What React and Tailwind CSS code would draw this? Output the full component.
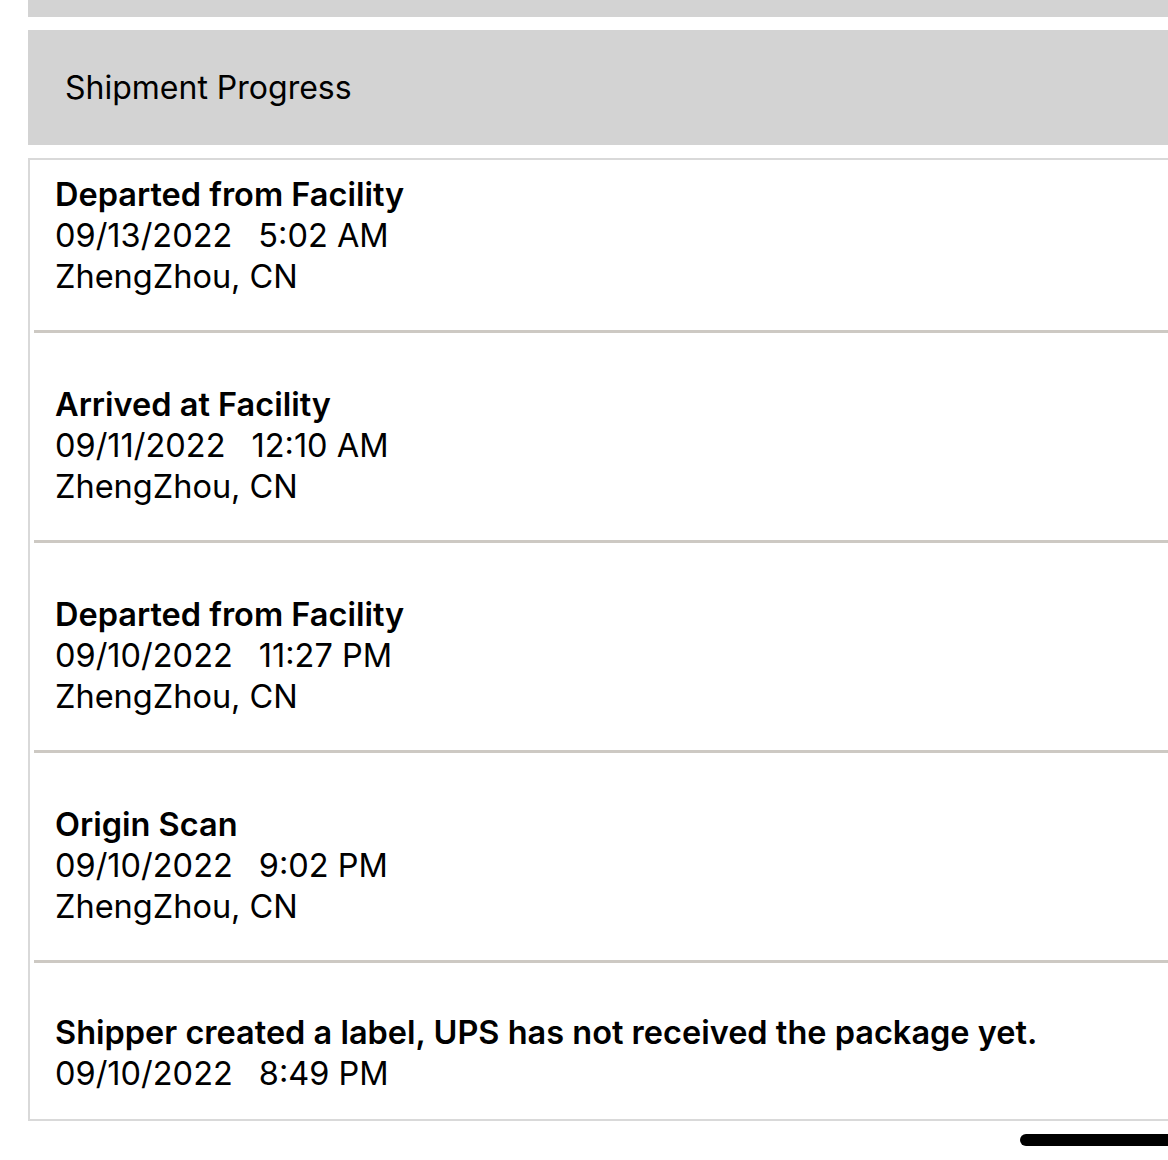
import React from "react";

const events = [
  {
    title: "Departed from Facility",
    date: "09/13/2022",
    time: "5:02 AM",
    place: "ZhengZhou, CN",
  },
  {
    title: "Arrived at Facility",
    date: "09/11/2022",
    time: "12:10 AM",
    place: "ZhengZhou, CN",
  },
  {
    title: "Departed from Facility",
    date: "09/10/2022",
    time: "11:27 PM",
    place: "ZhengZhou, CN",
  },
  {
    title: "Origin Scan",
    date: "09/10/2022",
    time: "9:02 PM",
    place: "ZhengZhou, CN",
  },
  {
    title: "Shipper created a label, UPS has not received the package yet.",
    date: "09/10/2022",
    time: "8:49 PM",
  },
];

const App = () => {
  return (
    <div
      className="w-[1168px] h-[1160px] bg-white overflow-hidden text-black"
      style={{ fontFamily: "Inter, 'Noto Sans', sans-serif" }}
    >
      <div className="pl-[28px]">
        <div className="h-[17px] bg-[#d3d3d3]" />

        <div className="mt-[13px] h-[115px] bg-[#d3d3d3] flex items-center pl-[37px]">
          <h2 className="text-[32px] font-normal">Shipment Progress</h2>
        </div>

        <div className="mt-[13px] border-l-2 border-t-2 border-b-2 border-[#d9d9d9]">
          {events.map((ev, i) => {
            const last = i === events.length - 1;
            return (
              <div
                key={i}
                className={
                  "ml-[4px] " +
                  (last ? "" : "border-b-[3px] border-[#cdc9c3] ") +
                  (i === 0 ? "pt-[14px] pb-[33px]" : last ? "pt-[49px] pb-[25px]" : "pt-[51px] pb-[33px]")
                }
              >
                <div className="pl-[21px] text-[32.5px] leading-[41px]">
                  <p className="font-semibold">{ev.title}</p>
                  <p>
                    {ev.date}
                    <span className="inline-block w-[26px]" />
                    {ev.time}
                  </p>
                  {ev.place && <p>{ev.place}</p>}
                </div>
              </div>
            );
          })}
        </div>

        <div className="flex justify-end mt-[13px]">
          <div className="w-[160px] h-[12px] bg-black rounded-full -mr-[12px]" />
        </div>
      </div>
    </div>
  );
};

export default App;
